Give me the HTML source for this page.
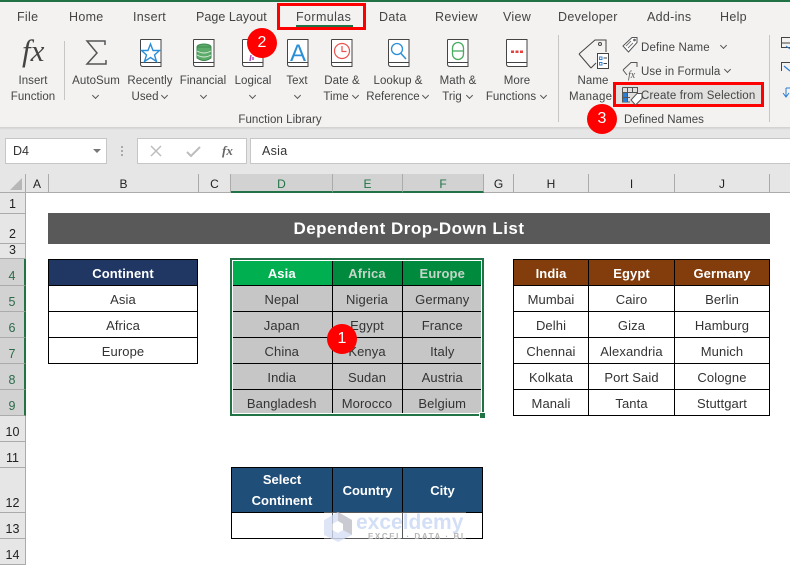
<!DOCTYPE html>
<html><head><meta charset="utf-8">
<style>
html,body{margin:0;padding:0}
body{width:790px;height:559px;overflow:hidden;position:relative;background:#fff;font-family:"Liberation Sans",sans-serif;color:#333}
.a{position:absolute;white-space:nowrap}
.t{position:absolute;top:9px;font-size:12.5px;line-height:16px;color:#444;white-space:nowrap;letter-spacing:.3px}
.l{position:absolute;font-size:11.5px;line-height:16px;color:#444;white-space:nowrap;text-align:center;transform:translateX(-50%);letter-spacing:.05px}
.ch{position:absolute;width:4px;height:4px;border-right:1px solid #555;border-bottom:1px solid #555;transform:rotate(45deg)}
.col{position:absolute;top:174px;height:19px;line-height:20px;font-size:12px;text-align:center;background:#e6e6e6;border-right:1px solid #ababab;box-sizing:border-box;color:#222;border-bottom:1px solid #ababab}
.col.s{background:#d2d2d2;color:#217346;border-bottom:2px solid #217346}
.row{position:absolute;left:0;width:26px;box-sizing:border-box;background:#e6e6e6;border-bottom:1px solid #ababab;border-right:1px solid #ababab;font-size:12.5px;text-align:center;color:#222;padding-right:2px}
.row.s{background:#d2d2d2;color:#2b6a4a;border-right:2px solid #217346}
.row span{position:absolute;left:0;right:0;bottom:0;line-height:18px}
table{position:absolute;border-collapse:collapse;table-layout:fixed;font-size:13px;color:#333}
td{border:1px solid #000;text-align:center;padding:0;overflow:hidden;white-space:nowrap}
table.p td{padding-top:2px;letter-spacing:.1px}
.h td{font-weight:bold;color:#fff}
.m{position:absolute;width:30px;height:30px;border-radius:50%;background:#f00;color:#fff;font-size:16px;line-height:30px;text-align:center}
svg{position:absolute;overflow:visible}
</style></head><body>

<!-- ribbon -->
<div class="a" style="left:0;top:0;width:790px;height:127px;background:#f3f2f1"></div>
<div class="a" style="left:0;top:0;width:790px;height:2px;background:#217346"></div>
<div class="t" style="left:17px">File</div>
<div class="t" style="left:69px">Home</div>
<div class="t" style="left:133px">Insert</div>
<div class="t" style="left:196px;letter-spacing:.05px">Page Layout</div>
<div class="t" style="left:296px;letter-spacing:.4px">Formulas</div>
<div class="a" style="left:296px;top:25px;width:57px;height:2px;background:#217346"></div>
<div class="t" style="left:379px">Data</div>
<div class="t" style="left:435px">Review</div>
<div class="t" style="left:503px">View</div>
<div class="t" style="left:558px">Developer</div>
<div class="t" style="left:647px">Add-ins</div>
<div class="t" style="left:720px">Help</div>
<div class="a" style="left:277px;top:3px;width:89px;height:27px;box-sizing:border-box;border:3px solid #f00"></div>

<!-- separators -->
<div class="a" style="left:64px;top:41px;width:1px;height:59px;background:#c8c6c4"></div>
<div class="a" style="left:558px;top:35px;width:1px;height:87px;background:#c8c6c4"></div>
<div class="a" style="left:769px;top:35px;width:1px;height:87px;background:#c8c6c4"></div>

<!-- ribbon icons -->
<svg width="790" height="127" style="left:0;top:0" viewBox="0 0 790 127" fill="none">
<defs>
<g id="bk"><path d="M1 .5H21V27.5H3Q.5 27.5 .5 25V1Z" fill="#fff" stroke="#444"/><path d="M1 23.5H21" stroke="#444"/></g>
</defs>
<text x="22" y="61" font-family="Liberation Serif" font-style="italic" font-size="31" fill="#444">fx</text>
<path d="M105 45V41H87L97 53L87 64H106V60" stroke="#555" stroke-width="1.5"/>
<use href="#bk" x="140" y="39"/>
<path d="M150.500 44L153 50.500H159.500L154.500 55L156.500 61.500L150.500 57.500L144.500 61.500L146.500 55L141.500 50.500H148Z" stroke="#2b8fd8" stroke-width="1.4" fill="#fff"/>
<use href="#bk" x="193" y="39"/>
<ellipse cx="204" cy="47" rx="7" ry="3" fill="#5dab6b" stroke="#3a8a4c"/>
<path d="M197 47V58Q204 63 211 58V47Z" fill="#5dab6b" stroke="#3a8a4c"/>
<path d="M197 51Q204 55 211 51M197 55Q204 59 211 55" stroke="#d8ecd9"/>
<use href="#bk" x="242" y="39"/>
<path d="M251 55L250 61M253 57V60" stroke="#b04fc0" stroke-width="1.5"/>
<use href="#bk" x="287" y="39"/>
<text x="298" y="61" text-anchor="middle" font-family="Liberation Sans" font-size="24" fill="#2b8fd8">A</text>
<use href="#bk" x="331" y="39"/>
<circle cx="342" cy="51" r="7.500" stroke="#e8534f" stroke-width="1.200" fill="#fff"/>
<path d="M342 46V51.500H346.500" stroke="#e8534f" stroke-width="1.200"/>
<use href="#bk" x="388" y="39"/>
<circle cx="397" cy="49" r="5.500" stroke="#2b8fd8" stroke-width="1.300" fill="#fff"/>
<path d="M401 53.500L406 59" stroke="#2b8fd8" stroke-width="1.500"/>
<use href="#bk" x="447" y="39"/>
<rect x="452.500" y="42.500" width="11" height="17" rx="5.500" stroke="#49ab5e" stroke-width="1.300"/>
<path d="M453 51H463" stroke="#49ab5e" stroke-width="1.300"/>
<use href="#bk" x="506" y="39"/>
<path d="M511 50.500h3v2.500h-3zM515.500 50.500h3v2.500h-3zM520 50.500h3v2.500h-3z" fill="#e8403c"/>
<!-- name manager -->
<path d="M579 54L595 40H606V52M591 68L579 54M591 68L596 63" stroke="#444" stroke-width="1"/>
<circle cx="600" cy="44" r="1.500" stroke="#444"/>
<rect x="597.500" y="53.500" width="11" height="15" fill="#fff" stroke="#444"/>
<path d="M599.500 57h2.500v2.500h-2.500zM599.500 62.500h2.500v2.500h-2.500z" stroke="#2b7cd3" stroke-width=".9"/>
<path d="M603.500 58H607M603.500 63.500H607" stroke="#444"/>
<!-- define name tag -->
<path d="M623 46L632 37.500H637V42.500L628.500 52Z" stroke="#555" fill="#fff"/>
<path d="M626 46L631 41M628 48L633 43" stroke="#777"/>
<circle cx="634.500" cy="40" r=".8" stroke="#555"/>
<!-- use in formula tag -->
<path d="M623 70L631 62.500H637V67M627 75L623 70" stroke="#555" fill="none"/>
<text x="628" y="78" font-family="Liberation Serif" font-style="italic" font-size="10" fill="#555">fx</text>
<!-- right icons -->
<rect x="781.500" y="37.500" width="9" height="10" stroke="#444"/><path d="M781 43H790" stroke="#444"/>
<path d="M786 46L790 49" stroke="#2b7cd3"/>
<path d="M781.500 71V62.500H790" stroke="#444"/><path d="M784 66L790 71" stroke="#2b7cd3" stroke-width="1.200"/>
<path d="M786 88V96M783 93L786 97L789 93M786 88H790" stroke="#2b7cd3"/>
</svg>

<div class="a" style="left:641px;top:40px;font-size:11.5px;line-height:16px;color:#444;letter-spacing:.15px">Define Name</div>
<div class="ch" style="left:721px;top:43px"></div>
<div class="a" style="left:641px;top:64px;font-size:11.5px;line-height:16px;color:#444;letter-spacing:.1px">Use in Formula</div>
<div class="ch" style="left:725px;top:67px"></div>

<!-- ribbon labels -->
<div class="l" style="left:33px;top:73px">Insert</div><div class="l" style="left:33px;top:89px">Function</div>
<div class="l" style="left:96px;top:73px">AutoSum</div><div class="ch" style="left:93px;top:93px"></div>
<div class="l" style="left:150px;top:73px">Recently</div><div class="l" style="left:145px;top:89px">Used</div><div class="ch" style="left:162px;top:93px"></div>
<div class="l" style="left:203px;top:73px">Financial</div><div class="ch" style="left:201px;top:93px"></div>
<div class="l" style="left:253px;top:73px">Logical</div><div class="ch" style="left:250px;top:93px"></div>
<div class="l" style="left:297px;top:73px">Text</div><div class="ch" style="left:295px;top:93px"></div>
<div class="l" style="left:342px;top:73px">Date &amp;</div><div class="l" style="left:336px;top:89px">Time</div><div class="ch" style="left:353px;top:93px"></div>
<div class="l" style="left:398px;top:73px">Lookup &amp;</div><div class="l" style="left:393px;top:89px">Reference</div><div class="ch" style="left:423px;top:93px"></div>
<div class="l" style="left:458px;top:73px">Math &amp;</div><div class="l" style="left:452px;top:89px">Trig</div><div class="ch" style="left:467px;top:93px"></div>
<div class="l" style="left:517px;top:73px">More</div><div class="l" style="left:511px;top:89px">Functions</div><div class="ch" style="left:541px;top:93px"></div>
<div class="l" style="left:593px;top:73px">Name</div><div class="a" style="left:569px;top:89px;font-size:11.5px;line-height:16px;color:#444;letter-spacing:.3px">Manager</div>
<div class="l" style="left:280px;top:112px">Function Library</div>
<div class="l" style="left:664px;top:112px">Defined Names</div>

<!-- Create from selection -->
<div class="a" style="left:613px;top:82px;width:151px;height:25px;box-sizing:border-box;border:3px solid #f00;background:#e1e0df"></div>
<svg width="24" height="20" style="left:622px;top:87px" viewBox="0 0 24 20" fill="none">
<path d="M.5 .5H15.500V6M.5 .5V15H8M.5 5.500H15M5.500 0V15M10.500 0V6M0 10.500H8" stroke="#555"/>
<rect x="1" y="6" width="4" height="4" fill="#2b7cd3"/><rect x="1" y="11" width="4" height="4" fill="#2b7cd3"/>
<path d="M9 13L15 6.500H20V11.500L13.500 18Z" fill="#fff" stroke="#555"/>
</svg>
<div class="a" style="left:641px;top:88px;font-size:11.5px;line-height:16px;color:#444;letter-spacing:.15px">Create from Selection</div>

<!-- formula bar -->
<div class="a" style="left:0;top:127px;width:790px;height:47px;background:#e6e6e6"></div>
<div class="a" style="left:0;top:127px;width:790px;height:3px;background:linear-gradient(#cfcfcf,#e6e6e6)"></div>
<div class="a" style="left:5px;top:138px;width:102px;height:26px;box-sizing:border-box;background:#fff;border:1px solid #c6c6c6;font-size:12.5px;line-height:24px;padding-left:7px;color:#333">D4</div>
<div class="a" style="left:93px;top:149px;width:0;height:0;border-left:4px solid transparent;border-right:4px solid transparent;border-top:4px solid #777"></div>
<div class="a" style="left:121px;top:146px;width:2px;height:2px;background:#aaa;box-shadow:0 4px 0 #aaa,0 8px 0 #aaa"></div>
<div class="a" style="left:137px;top:138px;width:110px;height:26px;box-sizing:border-box;background:#fff;border:1px solid #c6c6c6"></div>
<svg width="70" height="14" style="left:150px;top:145px" viewBox="0 0 70 14" fill="none">
<path d="M1 1L11 11M11 1L1 11" stroke="#bdbdbd" stroke-width="1.500"/>
<path d="M37 7L41 11L50 2" stroke="#bdbdbd" stroke-width="2"/>
</svg>
<div class="a" style="left:222px;top:143px;font-family:'Liberation Serif',serif;font-style:italic;font-weight:bold;font-size:13px;line-height:16px;color:#666">fx</div>
<div class="a" style="left:250px;top:138px;width:540px;height:26px;box-sizing:border-box;background:#fff;border:1px solid #c6c6c6;border-right:0;font-size:12.5px;line-height:25px;padding-left:11px;color:#333;letter-spacing:.3px">Asia</div>

<!-- column headers -->
<div class="col" style="left:0;width:26px;background:#e6e6e6"></div>
<div class="a" style="left:10px;top:178px;width:0;height:0;border-left:12px solid transparent;border-bottom:12px solid #b7b7b7"></div>
<div class="col" style="left:26px;width:23px">A</div>
<div class="col" style="left:49px;width:150px">B</div>
<div class="col" style="left:199px;width:32px">C</div>
<div class="col s" style="left:231px;width:102px">D</div>
<div class="col s" style="left:333px;width:70px">E</div>
<div class="col s" style="left:403px;width:81px">F</div>
<div class="col" style="left:484px;width:30px">G</div>
<div class="col" style="left:514px;width:75px">H</div>
<div class="col" style="left:589px;width:86px">I</div>
<div class="col" style="left:675px;width:95px">J</div>
<div class="col" style="left:770px;width:20px;border-right:0"></div>

<!-- row headers -->
<div class="row" style="top:193px;height:21px"><span>1</span></div>
<div class="row" style="top:214px;height:30px"><span>2</span></div>
<div class="row" style="top:244px;height:15px"><span style="line-height:15px">3</span></div>
<div class="row s" style="top:259px;height:27px"><span>4</span></div>
<div class="row s" style="top:286px;height:26px"><span>5</span></div>
<div class="row s" style="top:312px;height:26px"><span>6</span></div>
<div class="row s" style="top:338px;height:26px"><span>7</span></div>
<div class="row s" style="top:364px;height:26px"><span>8</span></div>
<div class="row s" style="top:390px;height:26px"><span>9</span></div>
<div class="row" style="top:416px;height:26px"><span>10</span></div>
<div class="row" style="top:442px;height:26px"><span>11</span></div>
<div class="row" style="top:468px;height:45px"><span>12</span></div>
<div class="row" style="top:513px;height:26px"><span>13</span></div>
<div class="row" style="top:539px;height:26px"><span>14</span></div>

<!-- title -->
<div class="a" style="left:48px;top:213px;width:722px;height:31px;background:#595959;color:#fff;font-weight:bold;font-size:17px;letter-spacing:.5px;line-height:31px;text-align:center">Dependent Drop-Down List</div>

<!-- Continent -->
<table class="p" style="left:48px;top:259px;width:150px">
<tr class="h" style="height:26px;background:#203764"><td>Continent</td></tr>
<tr style="height:26px"><td>Asia</td></tr>
<tr style="height:26px"><td>Africa</td></tr>
<tr style="height:26px"><td>Europe</td></tr>
</table>

<!-- Middle -->
<table class="p" style="left:232px;top:259px;width:250px;background:#c6c6c6">
<colgroup><col style="width:100px"><col style="width:70px"><col style="width:80px"></colgroup>
<tr class="h" style="height:26px"><td style="background:#00b050;border-left:0">Asia</td><td style="background:#008a3e;color:#c5d6c9">Africa</td><td style="background:#008a3e;color:#c5d6c9;border-right:0">Europe</td></tr>
<tr style="height:26px"><td style="border-left:0">Nepal</td><td>Nigeria</td><td style="border-right:0">Germany</td></tr>
<tr style="height:26px"><td style="border-left:0">Japan</td><td>Egypt</td><td style="border-right:0">France</td></tr>
<tr style="height:26px"><td style="border-left:0">China</td><td>Kenya</td><td style="border-right:0">Italy</td></tr>
<tr style="height:26px"><td style="border-left:0">India</td><td>Sudan</td><td style="border-right:0">Austria</td></tr>
<tr style="height:26px"><td style="border-left:0;border-bottom:0">Bangladesh</td><td style="border-bottom:0">Morocco</td><td style="border-right:0;border-bottom:0">Belgium</td></tr>
</table>
<div class="a" style="left:230px;top:258px;width:254px;height:158px;box-sizing:border-box;border:2px solid #217346;box-shadow:inset 0 0 0 1px #fff"></div>
<div class="a" style="left:479px;top:412px;width:5px;height:5px;background:#217346;border:1px solid #fff"></div>

<!-- Right -->
<table class="p" style="left:513px;top:259px;width:256px">
<colgroup><col style="width:75px"><col style="width:86px"><col style="width:95px"></colgroup>
<tr class="h" style="height:26px;background:#833c0b"><td>India</td><td>Egypt</td><td>Germany</td></tr>
<tr style="height:26px"><td>Mumbai</td><td>Cairo</td><td>Berlin</td></tr>
<tr style="height:26px"><td>Delhi</td><td>Giza</td><td>Hamburg</td></tr>
<tr style="height:26px"><td>Chennai</td><td>Alexandria</td><td>Munich</td></tr>
<tr style="height:26px"><td>Kolkata</td><td>Port Said</td><td>Cologne</td></tr>
<tr style="height:26px"><td>Manali</td><td>Tanta</td><td>Stuttgart</td></tr>
</table>

<!-- Bottom -->
<table style="left:231px;top:467px;width:251px">
<colgroup><col style="width:101px"><col style="width:70px"><col style="width:80px"></colgroup>
<tr class="h" style="height:45px;background:#1f4e78;line-height:21px"><td>Select<br>Continent</td><td>Country</td><td>City</td></tr>
<tr style="height:26px"><td></td><td></td><td></td></tr>
</table>

<!-- watermark -->
<div class="a" style="left:324px;top:512px;width:142px;height:28px;background:rgba(255,255,255,.35)"></div>
<svg width="30" height="32" style="left:323px;top:511px;opacity:.75" viewBox="0 0 30 32">
<path d="M15 1L29 9V24L15 31L1 24V9Z" fill="#d3ddf5"/>
<path d="M15 1L29 9V24L20 19V13L15 10Z" fill="#b9b9c4"/>
<path d="M9 13L15 10L20 13V19L15 22L9 19Z" fill="#fff"/>
</svg>
<div class="a" style="left:356px;top:510px;font-size:21px;line-height:26px;font-weight:bold;color:#cfdcf6;opacity:.9">exceldemy</div>
<div class="a" style="left:368px;top:532px;font-size:8px;line-height:10px;font-weight:bold;color:#b5b5b5;letter-spacing:1.6px">EXCEL · DATA · BI</div>

<!-- markers -->
<div class="m" style="left:327px;top:324px">1</div>
<div class="m" style="left:247px;top:28px">2</div>
<div class="m" style="left:587px;top:104px">3</div>
</body></html>
